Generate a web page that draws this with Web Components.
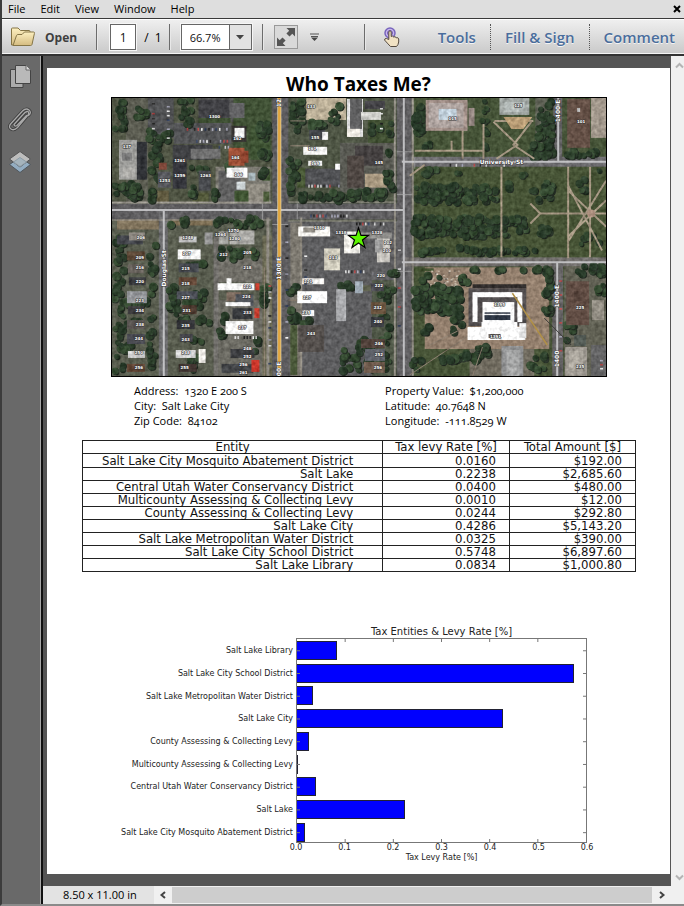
<!DOCTYPE html>
<html lang="en">
<head>
<meta charset="utf-8">
<title>Who Taxes Me?</title>
<style>
html, body { margin: 0; height: 100%; }
body { font-family: "Open Sans", "Noto Sans", sans-serif; font-size: 11px; color: #000; background: #555; }
</style>
</head>
<body>
<pdf-viewer>
  <menu-bar slot="menu"></menu-bar>
  <tool-bar slot="tools"></tool-bar>
  <side-rail slot="rail"></side-rail>
  <report-page>
    <span slot="title">Who Taxes Me?</span>
    <aerial-map></aerial-map>
    <property-facts></property-facts>
    <levy-table></levy-table>
    <levy-chart></levy-chart>
  </report-page>
  <status-bar slot="status"></status-bar>
</pdf-viewer>

<script>
const LEVIES = [
  ['Salt Lake City Mosquito Abatement District', '0.0160', '$192.00'],
  ['Salt Lake', '0.2238', '$2,685.60'],
  ['Central Utah Water Conservancy District', '0.0400', '$480.00'],
  ['Multicounty Assessing & Collecting Levy', '0.0010', '$12.00'],
  ['County Assessing & Collecting Levy', '0.0244', '$292.80'],
  ['Salt Lake City', '0.4286', '$5,143.20'],
  ['Salt Lake Metropolitan Water District', '0.0325', '$390.00'],
  ['Salt Lake City School District', '0.5748', '$6,897.60'],
  ['Salt Lake Library', '0.0834', '$1,000.80']
];
const esc = s => s.replace(/&/g, '&amp;');

function define(name, render) {
  customElements.define(name, class extends HTMLElement {
    constructor() {
      super();
      this.attachShadow({ mode: 'open' }).innerHTML = render();
    }
  });
}

define('pdf-viewer', () => `
<style>
:host { display: flex; flex-direction: column; min-height: 100vh; box-sizing: border-box; border-left: 2px solid #3c3c3c; border-bottom: 2px solid #8a8a8a; }
.body { flex: 1; display: flex; }
.doc { flex: 1; min-width: 0; display: flex; flex-direction: column; }
.view { flex: 1; display: flex; }
.canvas { flex: 1; min-width: 0; box-sizing: border-box; padding: 12px 0 12px 4px; background: #555; display: flex; flex-direction: column; }
.vbar { width: 14px; box-sizing: border-box; border-left: 1px solid #555; background: #f0f0f0; display: flex; flex-direction: column; justify-content: space-between; align-items: flex-end; padding: 5px 0 4px; overflow: hidden; }
button { border: 0; padding: 0; background: none; display: block; width: 11px; height: 9px; }
svg { display: block; }
</style>
<slot name="menu"></slot>
<slot name="tools"></slot>
<div class="body">
  <slot name="rail"></slot>
  <div class="doc">
    <div class="view">
      <div class="canvas"><slot></slot></div>
      <div class="vbar">
        <button aria-label="Scroll up"><svg width="11" height="9"><path d="M3 6.5L6.5 3L10 6.5" fill="none" stroke="#b4b4b4" stroke-width="2"/></svg></button>
        <button aria-label="Scroll down"><svg width="11" height="9"><path d="M3 2.500L6.500 6L10 2.500" fill="none" stroke="#b4b4b4" stroke-width="2"/></svg></button>
      </div>
    </div>
    <slot name="status"></slot>
  </div>
</div>`);

define('menu-bar', () => `
<style>
:host { display: flex; align-items: center; height: 18px; background: #dedede; border-bottom: 1px solid #3a3a3a; }
nav { display: flex; gap: 15px; margin-left: 6px; }
button { font: inherit; line-height: 16px; color: #000; border: 0; padding: 0; background: none; }
.close { margin-left: auto; margin-right: 3px; }
svg { display: block; }
</style>
<nav><button>File</button><button>Edit</button><button>View</button><button>Window</button><button>Help</button></nav>
<button class="close" aria-label="Close"><svg width="8" height="8"><path d="M1 1L7 7M7 1L1 7" stroke="#000" stroke-width="2"/></svg></button>`);

define('tool-bar', () => `
<style>
:host { display: flex; align-items: center; height: 37px; box-sizing: border-box; background: linear-gradient(#efefef, #c9c9c9); border-top: 1px solid #fff; border-bottom: 2px solid #333; box-shadow: inset 0 -1px #f4f4f4; padding: 0 9px 0 8px; }
button, input, select { font: inherit; color: #111; border: 0; background: none; padding: 0; margin: 0; border-radius: 0; }
svg { display: block; flex: none; }
.open { display: flex; align-items: center; gap: 9px; font-size: 12px; font-weight: 700; color: #3f3f3f; }
i { width: 1px; height: 26px; background: #6c6c6c; border-right: 1px solid #e8e8e8; flex: none; }
.page { width: 26px; height: 26px; box-sizing: border-box; border: 1px solid #666; outline: 1px solid #f6f6f6; background: #fff; text-align: center; font-size: 12px; }
.count { font-size: 12px; white-space: pre; }
.zoom { display: grid; width: 71px; height: 26px; box-sizing: border-box; border: 1px solid #666; outline: 1px solid #f6f6f6; background: #fff; }
.zoom select { grid-area: 1 / 1; appearance: none; width: 100%; padding-left: 8px; font-size: 11px; }
.zoom svg { grid-area: 1 / 1; justify-self: end; pointer-events: none; }
.tabs { display: flex; margin-left: auto; }
.tabs button { font-size: 15px; line-height: 26px; font-weight: 600; color: #4a6d9c; text-shadow: 0 1px #f4f4f4; }
.tabs button + button { border-left: 1px dotted #555; padding-left: 14px; margin-left: 14px; }
</style>
<button class="open"><svg width="26" height="22" viewBox="0 0 26 22">
<defs><linearGradient id="g" x1="0" y1="0" x2="0" y2="1"><stop offset="0" stop-color="#fdf0c0"/><stop offset="1" stop-color="#d4bb80"/></linearGradient></defs>
<path d="M1.500 19V3Q1.500 2 2.500 2H8L10.500 4.500H19Q20 4.500 20 5.500V9L5 19Z" fill="url(#g)" stroke="#857546"/>
<path d="M3 19.500L6.500 9.500Q7 8.500 8 8.500H12L14.500 6H23.500Q24.800 6 24.400 7.500L22 18.500Q21.700 19.500 20.500 19.500Z" fill="url(#g)" stroke="#857546"/></svg>Open</button>
<i style="margin:0 12px 0 19px"></i>
<input class="page" aria-label="Page" value="1">
<span class="count" style="margin-left:8px">/  1</span>
<i style="margin:0 10px 0 7px"></i>
<label class="zoom"><select aria-label="Zoom"><option>66.7%</option></select>
<svg width="22" height="24"><rect width="22" height="24" fill="#e2e2e2"/><path d="M.5 0V24" stroke="#666"/><path d="M7 10H15L11 14.500Z" fill="#444"/></svg></label>
<i style="margin:0 10px"></i>
<button aria-label="Fit page"><svg width="24" height="24"><rect x=".5" y=".5" width="23" height="23" fill="#d9d9d9" stroke="#999"/><path d="M12.500 3H21V11.500L18.300 8.800L15.500 11.600L12.400 8.500L15.200 5.700ZM3 12.500L5.700 15.200L8.500 12.400L11.600 15.500L8.800 18.300L11.500 21H3Z" fill="#555"/></svg></button>
<button aria-label="More tools" style="margin-left:12px"><svg width="9" height="9"><path d="M0 1H9M1 3.500H8" stroke="#555" stroke-width="1"/><path d="M1 4.500H8L4.500 8Z" fill="#444"/></svg></button>
<i style="margin:0 17px 0 45px"></i>
<button aria-label="Hand tool"><svg width="20" height="21" viewBox="0 0 20 21"><circle cx="7" cy="6" r="5" fill="#c8b8ec" stroke="#7864bd" stroke-width="1.500"/><circle cx="7" cy="6" r="2.500" fill="none" stroke="#7156b5"/>
<path d="M5.800 12.500V4.500Q7 3 8.200 4.500V9.500Q9.500 8.300 10.700 10Q12 9 13.200 10.700Q15 10 15.700 12V15Q15.300 18 13.500 19.500H7.500Q5.500 17.500 1.500 13Q1.500 11.300 3.500 11.500Z" fill="#f1e2c4" stroke="#554a40"/></svg></button>
<div class="tabs"><button>Tools</button><button>Fill &amp; Sign</button><button>Comment</button></div>`);

define('side-rail', () => `
<style>
:host { display: flex; flex-direction: column; align-items: center; gap: 18px; width: 39px; padding-top: 7px; background: #696969; border-right: 2px solid #111; box-shadow: inset -1px 0 #a8a8a8; box-sizing: content-box; }
button { border: 0; padding: 0; background: none; margin-right: 3px; }
svg { display: block; }
</style>
<button aria-label="Page thumbnails"><svg width="24" height="26" viewBox="0 0 24 26"><path d="M2.500 6.500H15V24.500H2.500Z" fill="#aaa" stroke="#444"/><path d="M7.500 2.500H18L22.500 7V20.500H7.500Z" fill="#b9b9b9" stroke="#444"/><path d="M18 2.500V7H22.500" fill="#ddd" stroke="#666"/></svg></button>
<button aria-label="Attachments"><svg width="24" height="25" viewBox="0 0 24 25"><g fill="none" stroke-linecap="round"><path d="M18.500 8.500L9 18.500Q6.500 20 6 17.500L15.500 7Q17 5 19 4.500T20.500 7.500L9.500 20.500Q6 24 3 22T3 16.500L14.500 4Q18 .5 21 3T20.500 8.500" stroke="#3e3e3e" stroke-width="3"/><path d="M18.500 8.500L9 18.500Q6.500 20 6 17.500L15.500 7Q17 5 19 4.500T20.500 7.500L9.500 20.500Q6 24 3 22T3 16.500L14.500 4Q18 .5 21 3T20.500 8.500" stroke="#a9a9a9" stroke-width="1.300"/></g></svg></button>
<button aria-label="Layers"><svg width="24" height="24" viewBox="0 0 24 24"><path d="M1.500 14.500L12 7.500L22.500 14.500L12 22.500Z" fill="#93adc2" stroke="#50575d"/><path d="M1.500 9L12 1.500L22.500 9L12 17Z" fill="#bdbdbd" stroke="#555"/><path d="M5.500 12L12 7.500L18.500 12L12 16.500Z" fill="#a5b4bd" stroke="#8e9da7"/></svg></button>`);

define('status-bar', () => `
<style>
:host { display: flex; height: 18px; background: #f0f0f0; align-items: center; }
.size { background: #e3e3e3; width: 91px; padding-left: 20px; line-height: 18px; }
button { border: 0; padding: 0; background: none; width: 18px; height: 18px; display: grid; place-items: center; }
.thumb { flex: 1; height: 16px; background: #cdcdcd; }
.right { width: 20px; margin-right: 12px; }
</style>
<span class="size">8.50 x 11.00 in</span>
<button aria-label="Scroll left"><svg width="8" height="8"><path d="M6 1L2.500 4L6 7" fill="none" stroke="#444" stroke-width="2"/></svg></button>
<span class="thumb"></span>
<button class="right" aria-label="Scroll right"><svg width="8" height="8"><path d="M2 1L5.500 4L2 7" fill="none" stroke="#444" stroke-width="2"/></svg></button>`);

define('report-page', () => `
<style>
:host { display: block; flex: 1; background: #fff; }
h1 { margin: 0; padding-top: 3px; font-size: 19px; line-height: 26px; font-weight: 700; text-align: center; }
</style>
<h1><slot name="title"></slot></h1>
<slot></slot>`);

define('property-facts', () => `
<style>
:host { display: grid; grid-template-columns: 5fr 4fr; margin: 6px 64px 0; padding: 0 20px 0 23px; line-height: 15px; font-variant-numeric: oldstyle-nums; white-space: pre; }
p { margin: 0; }
</style>
<div><p>Address:  1320 E 200 S</p><p>City:  Salt Lake City</p><p>Zip Code:  84102</p></div>
<div><p>Property Value:  $1,200,000</p><p>Latitude:  40.7648 N</p><p>Longitude:  -111.8529 W</p></div>`);

define('levy-table', () => `
<style>
:host { display: block; margin: 12px 34px 0 35px; font-family: "DejaVu Sans Condensed", "DejaVu Sans", sans-serif; font-size: 13px; color: #111; }
table { width: 100%; border-collapse: collapse; table-layout: fixed; }
th, td { border: 1px solid #222; padding: 0 13px 0 0; height: 12px; line-height: 12px; font-weight: 400; text-align: right; white-space: nowrap; }
th { padding: 0; text-align: center; }
tr:first-child td { height: 13px; line-height: 13px; }
td:first-child { padding-right: 29px; }
.e { width: 54.3%; } .r { width: 22.9%; }
</style>
<table><colgroup><col class="e"><col class="r"><col></colgroup>
<thead><tr><th>Entity</th><th>Tax levy Rate [%]</th><th>Total Amount [$]</th></tr></thead>
<tbody>${LEVIES.map(r => '<tr>' + r.map(c => `<td>${esc(c)}</td>`).join('') + '</tr>').join('')}</tbody></table>`);

define('levy-chart', () => {
  const rows = LEVIES.slice().reverse();
  let ticks = '';
  for (let i = 1; i < 6; i++) {
    const x = (i / 6 * 100) + '%';
    ticks += `<line x1="${x}" x2="${x}" y1="0" y2="3"/><svg y="100%" overflow="visible"><line x1="${x}" x2="${x}" y1="-3" y2="0"/></svg>`;
  }
  return `
<style>
:host { display: grid; grid-template-columns: minmax(0, 249fr) minmax(0, 291fr) minmax(0, 83fr); margin-top: 54px; font: 8px/10px "DejaVu Sans", sans-serif; color: #222; }
h2 { grid-column: 2; margin: 0; font-size: 10px; line-height: 12px; font-weight: 400; text-align: center; white-space: nowrap; }
.labels, .plot { grid-row: 2; height: 205px; box-sizing: border-box; }
.labels { grid-column: 1; }
.stack { display: grid; grid-template-rows: repeat(9, 1fr); align-items: center; height: 206px; padding-top: 2px; box-sizing: border-box; }
.labels .stack { justify-items: end; padding-right: 3px; white-space: nowrap; }
.plot { grid-column: 2; position: relative; overflow: hidden; border: 1px solid #777; }
.plot .stack { padding-top: 0; height: 205px; }
.bar { display: block; height: 19px; box-sizing: border-box; background: #00f; border: 1px solid #223; border-left: 0; }
.plot > svg { position: absolute; inset: 0; width: 100%; height: 100%; stroke: #777; }
.axis { grid-column: 2; display: flex; justify-content: space-between; }
.axis span { width: 0; display: flex; justify-content: center; }
.name { grid-column: 2; text-align: center; margin: 0; }
</style>
<h2>Tax Entities &amp; Levy Rate [%]</h2>
<div class="labels"><div class="stack">${rows.map(r => `<span>${esc(r[0])}</span>`).join('')}</div></div>
<div class="plot"><div class="stack">${rows.map(r => `<span class="bar" style="width:${r[1] / 0.6 * 100}%"></span>`).join('')}</div>
<svg aria-hidden="true">${ticks}${rows.map((r, i) => { const y = (5.8 + i * 11.2) + '%'; return `<line x1="0" x2="3" y1="${y}" y2="${y}"/><svg x="100%" overflow="visible"><line x1="-3" x2="0" y1="${y}" y2="${y}"/></svg>`; }).join('')}</svg></div>
<div class="axis">${['0.0', '0.1', '0.2', '0.3', '0.4', '0.5', '0.6'].map(t => `<span>${t}</span>`).join('')}</div>
<p class="name">Tax Levy Rate [%]</p>`;
});

define('aerial-map', () => {
  let seed = 7;
  const rnd = () => (seed = (seed * 16807) % 2147483647) / 2147483647;
  const pick = a => a[Math.floor(rnd() * a.length)];
  const R = list => list.map(([x, y, w, h, f]) => `<rect x="${x}" y="${y}" width="${w}" height="${h}" fill="${f}"/>`).join('');
  const trees = list => list.map(([x, y, w, h, n, r = 4]) => {
    let s = '';
    for (let i = 0; i < n; i++) {
      const cx = x + rnd() * w, cy = y + rnd() * h, q = r * (.6 + rnd() * .5);
      s += `<circle cx="${(cx + 1).toFixed(1)}" cy="${(cy + 1).toFixed(1)}" r="${q.toFixed(1)}" fill="#1c241c"/>` +
           `<circle cx="${cx.toFixed(1)}" cy="${cy.toFixed(1)}" r="${q.toFixed(1)}" fill="${pick(['#263825', '#2d422a', '#233524', '#344a30', '#2a3d29'])}"/>`;
    }
    return s;
  }).join('');
  const cars = list => list.map(([x, y, n, dx, dy]) => {
    let s = '';
    for (let i = 0; i < n; i++) if (rnd() > .2) s += `<rect x="${x + i * dx}" y="${y + i * dy}" width="${dx ? 1.6 : 3}" height="${dx ? 3 : 1.6}" fill="${pick(['#ccc', '#ddd', '#99a', '#33405c', '#a44', '#222'])}"/>`;
    return s;
  }).join('');

  const ground = R([
    [111, 97, 496, 279, '#4b503f'],
    [147, 97, 26, 40, '#4c4d4f'], [125, 97, 22, 106, '#57584d'], [173, 122, 58, 21, '#4e4f51'], [198, 97, 35, 24, '#4c4d4c'],
    [233, 97, 38, 60, '#3c4d31'], [250, 125, 20, 34, '#3a4e2f'], [215, 166, 55, 38, '#77756d'], [218, 170, 22, 32, '#5b5b5b'],
    [246, 183, 23, 20, '#8a867c'], [288, 97, 110, 106, '#4a5140'], [306, 97, 40, 22, '#b7ab93'], [305, 168, 38, 18, '#4b4c4f'],
    [340, 142, 56, 50, '#55564f'], [368, 119, 27, 23, '#3d4c2f'], [365, 173, 22, 14, '#a5957d'],
    [111, 217, 160, 159, '#54584a'], [116, 218, 50, 11, '#7d7059'], [170, 217, 42, 8, '#77694f'], [216, 258, 48, 24, '#6c6a63'],
    [218, 300, 45, 76, '#68675f'], [262, 235, 10, 141, '#66654f'],
    [288, 221, 110, 155, '#59595b'], [290, 222, 11, 154, '#77736a'], [372, 280, 25, 96, '#4b5343'],
    [412, 97, 195, 60, '#414f33'], [412, 165, 195, 96, '#424f31'], [536, 97, 12, 58, '#595c50'],
    [412, 266, 195, 110, '#424f32'], [425, 267, 125, 82, '#8f7b69'], [470, 349, 65, 27, '#6c675b'], [565, 266, 42, 110, '#5d5d50']
  ]);
  const grass = R([[198, 117, 32, 5, '#38492d'], [290, 325, 7, 50, '#465435'], [154, 190, 14, 13, '#5b553b'], [192, 192, 16, 12, '#4c5234'], [234, 190, 14, 13, '#3d5230'], [262, 168, 8, 12, '#3e5230'], [263, 191, 6, 12, '#465635'], [297, 167, 8, 20, '#455532'], [414, 268, 20, 3, '#3b4a2a'], [360, 285, 20, 6, '#5b5e4c']]);

  const roads = R([
    [111, 203, 292, 16, '#5a595b'], [272, 97, 16, 279, '#58575a'], [397, 97, 15, 279, '#5d5c5e'], [404, 156, 203, 10, '#68676a'],
    [404, 257, 203, 9, '#6d6a68'], [554, 97, 9, 62, '#5d5c5e'], [553, 262, 11, 114, '#605e5f'], [158, 209, 9, 167, '#68686a'], [213, 236, 5, 140, '#6c6a66'],
    [266, 217, 3, 159, '#89857d'], [300, 217, 2, 159, '#8b867c'], [394, 97, 2, 279, '#8c887f'], [412, 97, 2, 279, '#8c887f'],
    [111, 201, 160, 2, '#96928a'], [111, 219, 160, 1, '#96928a'], [288, 201, 106, 1, '#96928a'], [288, 220, 106, 1, '#96928a']
  ]);
  const paths = `<g fill="none" stroke="#a0927e" stroke-width="2"><path d="M502 166V257M569 166V258M540 213H607M531 203L541 213L531 223M569 190L607 226M569 236L607 200M591 166V257M569 241L607 180M569 185L603 250M415 150H484M484 123V158M494 121L518 144L497 158M532 121L514 144L535 158M463 115V158M410 175L425 164M452 150V140M495 120H534"/></g>
  <g fill="none" stroke="#85786a"><path d="M473 376L483 347M410 375L470 335M430 345L460 330M290 120H305M290 145H310M288 300H300M264 267V376"/></g>
  <circle cx="592" cy="213" r="4" fill="#a98c7b"/><path d="M504 116H533L524 128H512Z" fill="#b39770"/>`;

  const forest = trees([
    [114, 100, 10, 30, 14], [131, 98, 15, 34, 6], [147, 130, 22, 10, 14], [149, 142, 12, 40, 16], [178, 98, 12, 27, 16], [114, 183, 26, 16, 24],
    [145, 190, 8, 10, 5], [258, 122, 10, 36, 18], [222, 163, 8, 8, 4], [190, 165, 18, 8, 6], [189, 184, 6, 15, 5], [213, 190, 8, 10, 5], [258, 168, 6, 8, 4],
    [214, 217, 52, 9, 20], [170, 217, 16, 9, 5], [291, 100, 12, 30, 16], [305, 120, 28, 6, 9], [330, 105, 10, 18, 6], [288, 157, 10, 30, 17], [300, 192, 55, 8, 24], [288, 178, 6, 14, 5],
    [370, 122, 22, 15, 6], [357, 190, 36, 8, 18], [385, 150, 8, 42, 10], [414, 100, 8, 44, 12, 5], [423, 140, 14, 7, 4], [482, 98, 6, 50, 14, 3], [536, 120, 18, 35, 26, 5], [530, 140, 24, 20, 10, 5], [540, 98, 12, 24, 8],
    [567, 150, 36, 7, 14], [420, 168, 50, 6, 8], [416, 184, 82, 18, 90], [412, 216, 116, 20, 120], [508, 170, 34, 30, 8], [543, 178, 10, 20, 11], [540, 224, 10, 10, 8], [576, 170, 26, 22, 5], [578, 232, 22, 18, 6],
    [420, 247, 130, 6, 34], [571, 266, 34, 8, 12], [414, 289, 46, 22, 60, 5], [418, 275, 26, 12, 7], [460, 276, 8, 6, 5], [545, 267, 8, 50, 26], [452, 297, 10, 36, 18], [416, 327, 16, 6, 5], [440, 352, 45, 10, 20, 5], [412, 360, 10, 12, 5], [477, 347, 12, 8, 7], [530, 352, 16, 18, 10], [470, 268, 78, 4, 8],
    [168, 282, 8, 28, 20], [175, 302, 12, 18, 8], [113, 234, 10, 140, 36], [148, 240, 7, 130, 24], [122, 300, 30, 6, 7], [120, 320, 30, 4, 5], [112, 345, 20, 6, 7], [190, 292, 14, 16, 14], [178, 316, 34, 8, 8], [180, 338, 30, 6, 5], [180, 263, 30, 2, 5], [220, 247, 36, 12, 16], [218, 310, 7, 28, 9], [252, 340, 8, 12, 6], [261, 287, 6, 18, 12, 4], [189, 357, 9, 16, 8],
    [289, 285, 10, 8, 7], [289, 310, 10, 12, 11], [301, 319, 10, 5, 5], [340, 283, 12, 6, 5], [342, 337, 30, 34, 28], [375, 287, 20, 14, 12], [378, 310, 14, 60, 16], [390, 265, 6, 12, 5], [430, 220, 10, 8, 5], [567, 322, 8, 24, 5], [599, 272, 6, 22, 7]
  ]);

  const buildings = R([
    [118, 139, 18, 40, '#9a9a97'], [136, 141, 10, 38, '#2c2e32'], [121, 152, 10, 8, '#777'], [122, 167, 12, 10, '#aaa9a5'], [198, 99, 31, 18, '#3c3c40'], [229, 102, 15, 15, '#5e5e60'],
    [231, 125, 15, 16, '#33302f'], [234, 127, 10, 10, '#e8e8e8'], [172, 144, 40, 15, '#3b3c3f'], [190, 148, 30, 10, '#6b6b6b'], [172, 159, 14, 29, '#303137'], [157, 171, 13, 16, '#55565b'], [198, 170, 12, 20, '#45474b'], [158, 162, 8, 7, '#7c4436'],
    [228, 147, 16, 18, '#9d4e34'], [240, 150, 8, 12, '#8b402b'], [226, 167, 21, 10, '#f2f2f2'], [236, 181, 9, 8, '#c3cacc'], [248, 172, 7, 8, '#9aa8ad'],
    [309, 129, 16, 10, '#3e4146'], [322, 131, 6, 8, '#e8e8e8'], [303, 146, 24, 8, '#f0f0ee'], [308, 160, 14, 5, '#dedede'], [335, 163, 5, 6, '#ececec'], [347, 98, 16, 38, '#dadada'], [350, 98, 12, 30, '#5b5b5c'], [347, 128, 13, 8, '#ece8e0'],
    [355, 145, 28, 20, '#403c3c'], [347, 155, 17, 32, '#4b433f'], [365, 100, 20, 8, '#3f3e42'], [361, 111, 20, 8, '#c8c8c4'],
    [426, 99, 42, 31, '#9b8982'], [429, 102, 35, 25, '#aa9f9b'], [439, 108, 18, 11, '#bccbd6'], [469, 107, 6, 18, '#8f817c'], [500, 97, 30, 17, '#9ba19e'], [505, 101, 20, 10, '#aeb5b3'],
    [568, 98, 23, 49, '#5f4b41'], [578, 107, 3, 4, '#aaa'], [592, 97, 15, 40, '#9d9387'],
    [116, 235, 26, 9, '#3e4046'], [128, 232, 16, 8, '#8a857e'], [178, 236, 18, 6, '#b9b9b9'], [218, 231, 10, 13, '#9a9a96'], [229, 230, 25, 14, '#a7a6a2'], [204, 232, 8, 12, '#8d8d8d'],
    [126, 251, 18, 9, '#54402f'], [127, 264, 16, 9, '#66605a'], [128, 277, 17, 8, '#36373a'], [126, 291, 20, 12, '#8e9094'], [127, 306, 16, 8, '#3b3a3c'], [126, 320, 18, 9, '#55504d'], [126, 334, 18, 10, '#42434a'], [127, 351, 17, 7, '#c9c9c9'], [126, 364, 18, 8, '#5b4030'],
    [177, 249, 23, 10, '#f1f1f1'], [178, 263, 20, 9, '#3e4147'], [178, 277, 18, 8, '#5e4232'], [176, 291, 21, 8, '#4a4d55'], [181, 305, 15, 9, '#4a372d'], [176, 320, 18, 9, '#2f3034'], [179, 334, 13, 8, '#434348'], [175, 350, 20, 8, '#d0d0d0'], [178, 364, 18, 8, '#3b2f2b'], [198, 349, 7, 14, '#f0eee8'],
    [217, 283, 37, 7, '#f3f3f3'], [226, 278, 5, 6, '#f3f3f3'], [226, 292, 15, 9, '#766559'], [235, 294, 18, 12, '#4d5157'], [225, 302, 25, 4, '#efefef'], [232, 308, 20, 11, '#343639'], [225, 321, 28, 13, '#f1f1f0'], [230, 349, 24, 9, '#38393c'], [221, 364, 32, 9, '#3e4043'],
    [255, 283, 4, 7, '#c43a2b'], [254, 308, 5, 10, '#c43a2b'], [251, 360, 8, 12, '#c63226'],
    [298, 226, 32, 10, '#f1efea'], [303, 227, 12, 5, '#8d8981'], [324, 248, 16, 22, '#cbc7b8'], [302, 278, 22, 6, '#eceae6'], [297, 291, 30, 12, '#fff'], [302, 310, 12, 6, '#eee'], [298, 325, 26, 27, '#504b48'], [336, 289, 10, 32, '#a4a5a8'], [344, 231, 16, 22, '#e8e6e0'], [360, 232, 32, 6, '#8a8986'], [377, 238, 13, 24, '#c3c0ba'],
    [375, 239, 8, 13, '#999'], [372, 272, 14, 3, '#6b6b70'], [371, 283, 13, 8, '#46464c'], [371, 302, 15, 12, '#66503b'], [371, 317, 13, 10, '#35373c'], [361, 339, 24, 9, '#4f3f38'], [365, 349, 20, 12, '#5b5e66'], [364, 362, 21, 11, '#6a5648'], [355, 281, 8, 12, '#98a3ae'],
    [473, 284, 54, 4, '#2d2928'], [469, 288, 58, 38, '#4e4a4b'], [473, 292, 50, 30, '#fff'], [478, 297, 40, 25, '#4e4a4b'], [483, 302, 32, 22, '#fff'], [485, 312, 26, 2, '#555b66'], [485, 315, 26, 5, '#2a3240'], [482, 322, 36, 12, '#fff'], [468, 327, 58, 13, '#fafafa'], [489, 334, 12, 4, '#5a5350'], [520, 323, 7, 15, '#ddd'],
    [502, 346, 22, 30, '#8a8b8c'], [507, 350, 13, 26, '#a1a2a2'], [567, 281, 23, 44, '#5d4940'], [575, 291, 8, 10, '#4e3c34'], [566, 347, 22, 29, '#98938b'], [570, 351, 14, 20, '#a9a49b'], [575, 335, 12, 11, '#4e5650'], [593, 300, 12, 20, '#8f8a80'], [592, 345, 15, 31, '#5f5f60']
  ]);
  const vehicles = cars([
    [166, 105, 9, 0, 4.5], [151, 102, 6, 0, 5], [186, 127, 12, 3.6, 0], [192, 139, 11, 3.4, 0], [218, 145, 4, 3, 0], [310, 214, 14, 3, 0], [356, 222, 10, 3, 0],
    [308, 184, 11, 3, 0], [268, 285, 14, 0, 6], [285, 225, 8, 0, 16], [398, 230, 7, 0, 19], [304, 255, 7, 0, 7], [234, 336, 8, 3, 0], [345, 270, 7, 3, 0], [560, 280, 6, 0, 14], [380, 102, 6, 0, 5], [601, 360, 4, 0, 4], [450, 163, 10, 6, 0]
  ]);
  let rubble = '';
  for (let i = 0; i < 90; i++) rubble += `<rect x="${(426 + rnd() * 34).toFixed(1)}" y="${(270 + rnd() * 26).toFixed(1)}" width="2" height="1.5" fill="${pick(['#b7aa99', '#6d6257', '#c4bdb0', '#857262'])}"/>`;
  const lines = `<g fill="none" stroke="#d6d6d8" stroke-width="2" opacity=".8"><path d="M111 209.500H403M404 97V376M402 161H607M402 262H607M559 97V161M558 262V376M163 209V376"/></g>
  <g fill="none" stroke="#aaa" stroke-width="1" opacity=".7"><path d="M262 203V219M297 203V219M272 224H288M397 151H412M397 194H412M397 271H412M415 157V168"/></g>
  <path d="M279 97V376" stroke="#e8d5a8" stroke-width="4"/><path d="M279 97V376" stroke="#e0a63f" stroke-width="2.500"/><path d="M513 293L548 345" stroke="#b09047" stroke-width="1.500"/><path d="M545 318L572 345" stroke="#3b3b38"/>`;

  const numbers = [
    [126, 146, '137'], [214, 116, '1300'], [237, 138, '162'], [235, 157, '164'], [179, 160, '1261'], [164, 180, '1253'], [179, 175, '1259'], [205, 175, '1263'], [238, 174, '166'], [311, 106, '133'], [315, 137, '155'], [312, 148, '161'], [315, 163, '169'], [379, 162, '145'], [453, 118, '115'], [519, 105, '125'], [582, 121, '101'],
    [220, 235, '1264'], [233, 231, '1270'], [234, 239, '1280'], [140, 238, '206'], [187, 238, '1248'], [139, 258, '209'], [139, 268, '216'], [139, 282, '220'], [139, 301, '223'], [139, 311, '234'], [139, 325, '238'], [138, 339, '244'], [138, 353, '250'], [138, 368, '256'],
    [186, 254, '207'], [185, 269, '215'], [185, 284, '218'], [185, 298, '227'], [186, 311, '231'], [185, 326, '235'], [185, 340, '243'], [185, 353, '248'], [184, 368, '255'],
    [223, 255, '212'], [247, 253, '205'], [247, 268, '218'], [247, 287, '222'], [246, 297, '224'], [247, 313, '233'], [242, 328, '237'], [247, 349, '248'], [247, 357, '252'], [243, 365, '256'], [243, 373, '261'],
    [333, 258, '213'], [308, 282, '221'], [307, 298, '227'], [306, 313, '235'], [311, 334, '243'], [319, 228, '1310'], [341, 233, '1318'], [377, 233, '1328'], [388, 243, '202'], [387, 251, '210'], [381, 276, '220'], [379, 286, '222'], [378, 308, '232'], [378, 322, '240'], [379, 344, '246'], [379, 355, '252'], [378, 368, '256'],
    [500, 305, '1395'], [581, 308, '225'], [581, 367, '235'], [496, 337, '1391']
  ].map(([x, y, t]) => `<text x="${x}" y="${y + 1}">${t}</text>`).join('');
  const street = (x, y, t, a = -90) => `<text transform="translate(${x} ${y}) rotate(${a})" dy="2">${t}</text>`;

  return `
<style>
:host { display: block; margin: 0 63px 0 64px; }
svg { display: block; width: 100%; box-sizing: border-box; border: 1px solid #000; font-family: "DejaVu Sans", sans-serif; font-weight: 700; }
.num { font-size: 4px; }
.st { font-size: 6px; }
.num, .st { fill: #fff; stroke: #333; stroke-width: 1; paint-order: stroke; text-anchor: middle; }
</style>
<svg viewBox="111 97 496 279" role="img" aria-label="Aerial map of 1320 E 200 S">
<defs>
<filter id="grain" x="0" y="0" width="1" height="1" color-interpolation-filters="sRGB"><feTurbulence type="fractalNoise" baseFrequency=".25" numOctaves="2" seed="4" result="n"/><feColorMatrix in="n" values="1 0 0 0 0  1 0 0 0 0  1 0 0 0 0  0 0 0 0 1" result="g"/><feComposite in="SourceGraphic" in2="g" operator="arithmetic" k1=".3" k2=".85" k3=".14" k4="-.05" result="b"/><feGaussianBlur in="b" stdDeviation=".4"/></filter>
</defs>
<g filter="url(#grain)">${ground}${grass}${rubble}${roads}${forest}${paths}${buildings}${vehicles}</g>
${lines}
<g class="num">${numbers}</g>
<g class="st">${street(163, 268, 'Douglas St')}${street(279, 268, '1300 E')}${street(279, 369, '00 E')}${street(279, 102, '12')}${street(558, 296, '1400 E')}${street(558, 359, '1400')}${street(559, 110, '1400 E')}${street(502, 161, 'University St', 0)}</g>
<path d="M358.500 227.500L361 235H368.500L362.500 239.500L365 247L358.500 242.500L352 247L354.500 239.500L348.500 235H356Z" fill="#5cf500" stroke="#000" stroke-width="1.200"/>
</svg>`;
});
</script>
</body>
</html>
